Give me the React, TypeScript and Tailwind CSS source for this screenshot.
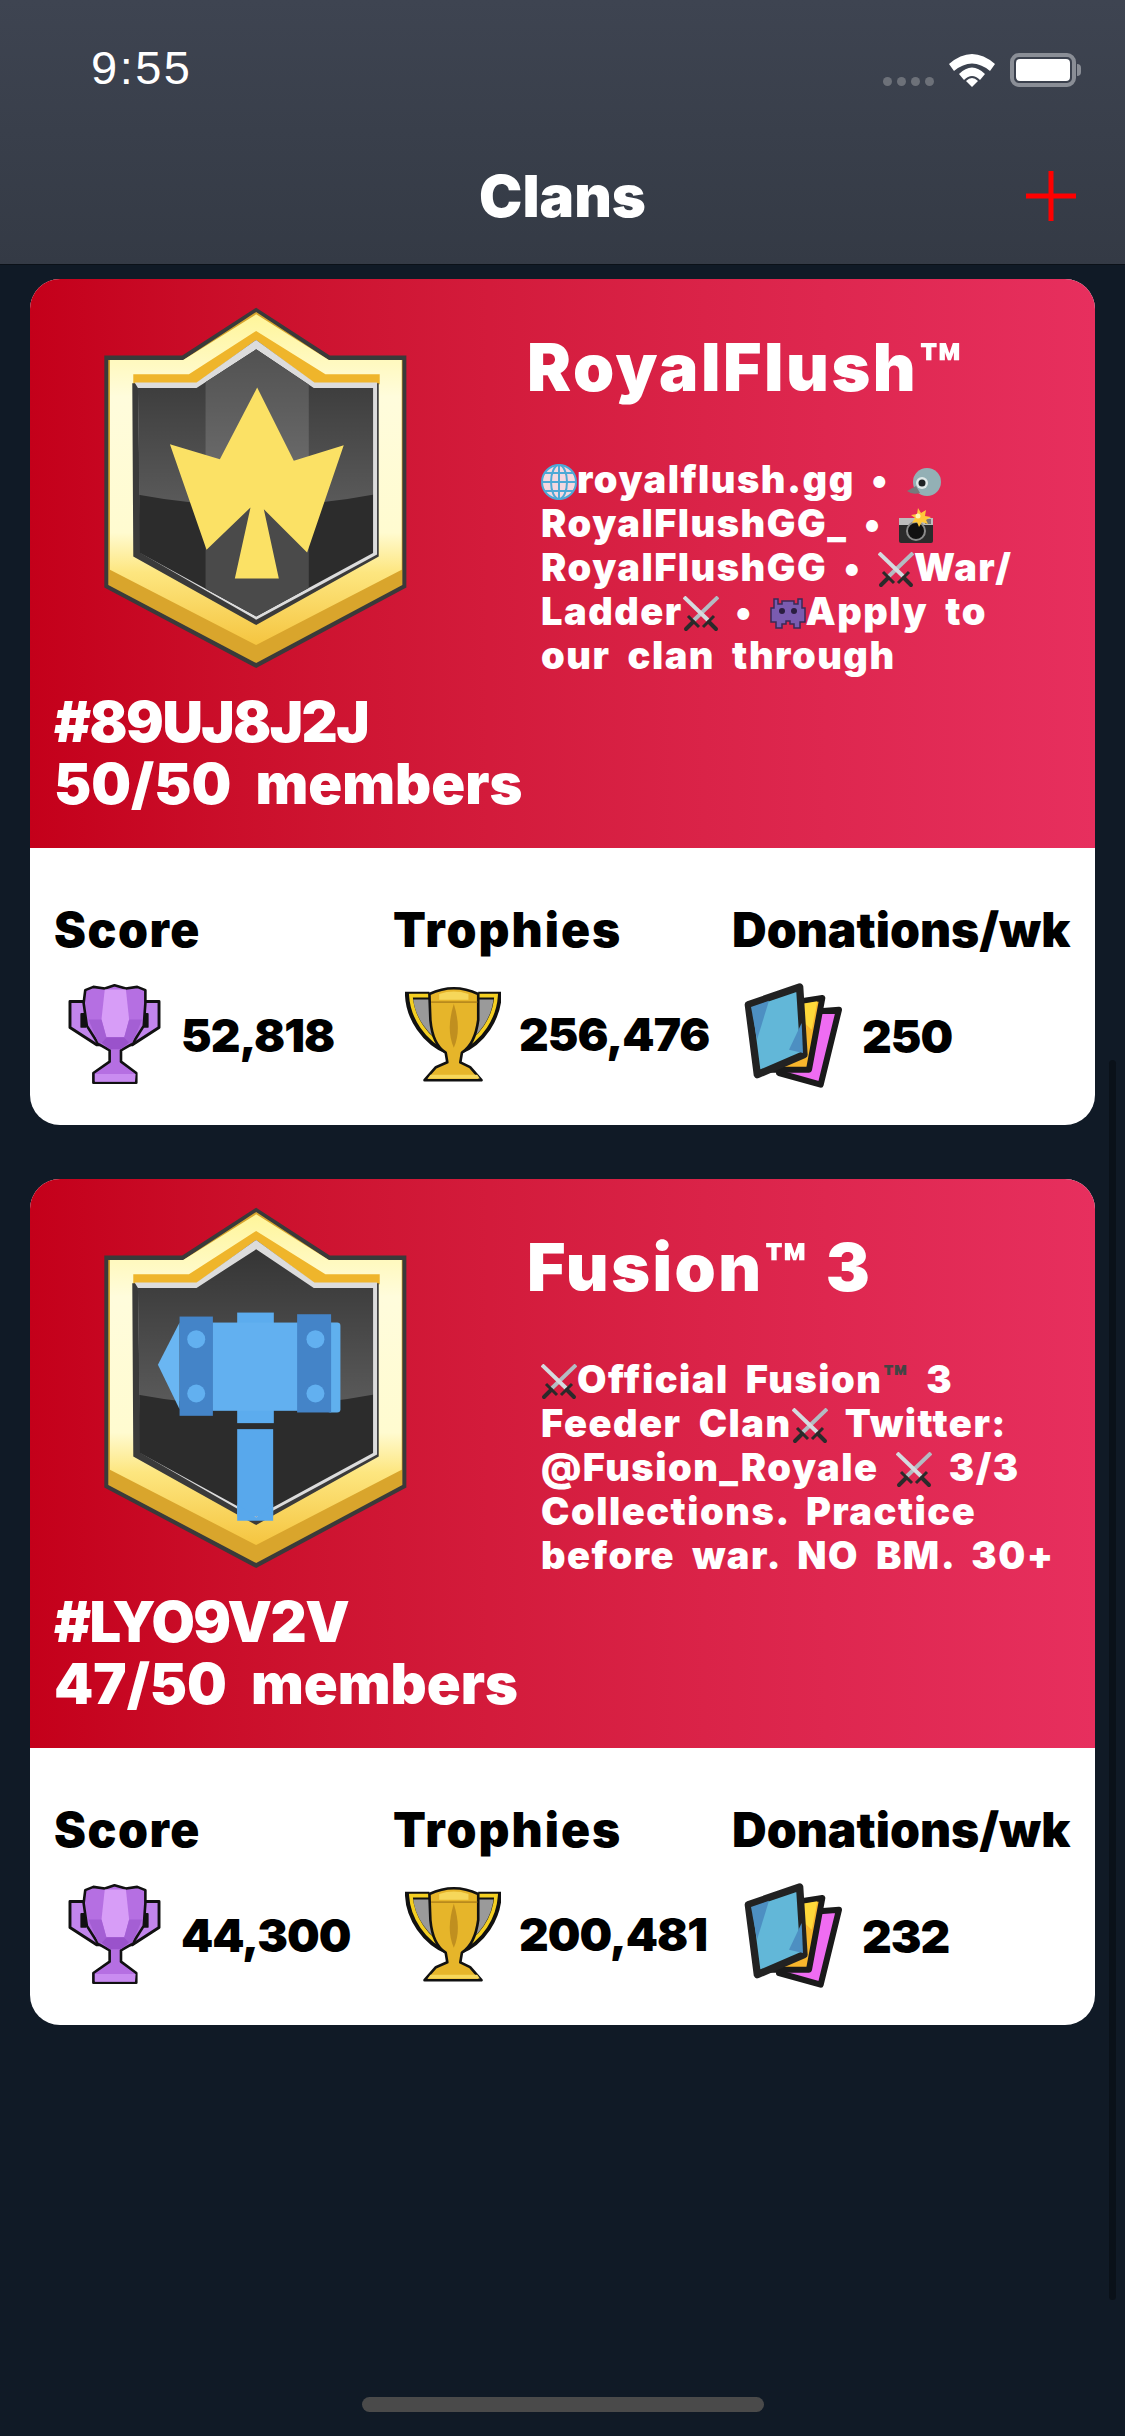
import type { ReactNode } from "react";

// small emoji drawings used in the clan descriptions
function Globe() {
  return (
    <svg viewBox="0 0 36 36" className="inline-block w-[36px] h-[36px] align-[-7px]">
      <circle cx="18" cy="18" r="17" fill="#f6d8e0" stroke="#4ea9d6" strokeWidth="2" />
      <ellipse cx="18" cy="18" rx="8" ry="17" fill="none" stroke="#4ea9d6" strokeWidth="2" />
      <path d="M18 1v34M1 18h34M4 9h28M4 27h28" fill="none" stroke="#4ea9d6" strokeWidth="2" />
    </svg>
  );
}

function Bird() {
  return (
    <svg viewBox="0 0 36 36" className="inline-block w-[36px] h-[36px] align-[-7px]">
      <circle cx="21" cy="18" r="14" fill="#93b0b5" />
      <path d="M10 22 L1 27 Q6 31 14 29z" fill="#77797c" />
      <circle cx="16" cy="19" r="6" fill="#dfe8e8" />
      <circle cx="16" cy="19" r="3.5" fill="#1e2224" />
    </svg>
  );
}

function Camera() {
  return (
    <svg viewBox="0 0 36 36" className="inline-block w-[36px] h-[36px] align-[-7px]">
      <rect x="1" y="10" width="34" height="25" rx="2" fill="#2b2b2b" />
      <rect x="1" y="10" width="34" height="7" fill="#bdbdbd" />
      <circle cx="18" cy="23" r="9" fill="#111" stroke="#8a8a8a" strokeWidth="2" />
      <rect x="27" y="11" width="6" height="5" fill="#777" />
      <path d="M20 0l3 5 5-3-1 6 6 1-5 3 2 4-6-2-3 5-2-5-5 1 3-5-4-3 6-1z" fill="#ffc83a" />
      <circle cx="20" cy="8" r="2.5" fill="#fff4b8" />
    </svg>
  );
}

function Swords() {
  return (
    <svg viewBox="0 0 36 36" className="inline-block w-[36px] h-[36px] align-[-7px]">
      <path d="M35 1 L9 26" stroke="#b3bcc2" strokeWidth="4" />
      <path d="M1 1 L27 26" stroke="#d5dbdf" strokeWidth="4" />
      <path d="M5 20 L16 31 M20 31 L31 20" stroke="#2a2a2a" strokeWidth="3" />
      <path d="M10 26 L3 33 M26 26 L33 33" stroke="#2a2a2a" strokeWidth="4" strokeLinecap="round" />
    </svg>
  );
}

function Alien() {
  return (
    <svg viewBox="0 0 36 36" className="inline-block w-[36px] h-[36px] align-[-7px]">
      <path
        d="M4 3h4v5h4V5h12v3h4V3h4v9h3v14h-5v6h-6v-4h-4v-3h-4v3h-4v4H6v-6H1V12h3z"
        fill="#7a5bb0"
        stroke="#3a2a55"
        strokeWidth="1.5"
      />
      <circle cx="12" cy="15" r="3" fill="#2a1d40" />
      <circle cx="24" cy="15" r="3" fill="#2a1d40" />
    </svg>
  );
}

function Crown() {
  return (
    <polygon
      points="590,325 700,545 850,498 740,820 610,690 655,898 523,898 570,685 438,812 328,495 478,540"
      fill="#fbe165"
    />
  );
}

function Hammer() {
  return (
    <g transform="translate(0 40)">
      <rect x="530" y="710" width="108" height="262" fill="#58a8ec" />
      <polygon points="530,935 587,975 638,935 638,985 530,985" fill="#58a8ec" />
      <rect x="530" y="360" width="110" height="332" fill="#5cacee" />
      <rect x="455" y="390" width="258" height="265" fill="#62b0f0" />
      <polygon points="357,390 292,517 357,650" fill="#6ab6f2" />
      <rect x="800" y="390" width="40" height="270" rx="10" fill="#60b0ee" />
      <rect x="357" y="372" width="100" height="298" fill="#4484c8" />
      <rect x="710" y="365" width="102" height="295" fill="#4484c8" />
      <circle cx="407" cy="440" r="27" fill="#62b0f0" />
      <circle cx="407" cy="603" r="27" fill="#62b0f0" />
      <circle cx="765" cy="440" r="27" fill="#62b0f0" />
      <circle cx="765" cy="603" r="27" fill="#62b0f0" />
    </g>
  );
}

function Badge({ id, dark, children }: { id: string; dark?: boolean; children: ReactNode }) {
  const win = "232,326 408,326 587,210 760,326 938,326 938,822 587,1012 238,822";
  return (
    <svg viewBox="125 80 920 1090" className="w-[307px] h-[363px] ml-[48px] mt-[27px] shrink-0">
      <defs>
        <linearGradient id={`face-${id}`} x1="0" y1="0" x2="0" y2="1">
          <stop offset="0" stopColor="#fff59a" />
          <stop offset="0.25" stopColor="#fffcdc" />
          <stop offset="0.66" stopColor="#fffbd0" />
          <stop offset="0.78" stopColor="#fde680" />
          <stop offset="1" stopColor="#f5c540" />
        </linearGradient>
        <clipPath id={`win-${id}`}>
          <polygon points={win} />
        </clipPath>
        <linearGradient id={`gloss-${id}`} x1="0" y1="0" x2="0" y2="1">
          <stop offset="0" stopColor="#fff" stopOpacity="0.02" />
          <stop offset="1" stopColor="#fff" stopOpacity="0.22" />
        </linearGradient>
      </defs>
      <polygon
        points="587,85 808,229 1038,229 1038,925 587,1167 131,925 131,229 365,229"
        fill="#3a3a3a"
      />
      <polygon
        points="587,98 805,242 1026,242 1026,918 587,1152 143,918 143,242 368,242"
        fill="#d9a52c"
      />
      <polygon
        points="587,105 805,242 1024,242 1024,872 587,1098 148,872 148,242 368,242"
        fill={`url(#face-${id})`}
      />
      {/* orange rim above the window */}
      <polygon points="218,285 385,285 587,155 795,285 958,285 958,315 218,315" fill="#efb52b" />
      <polygon points="215,312 408,312 587,182 762,312 955,312 955,832 587,1038 218,832" fill="#3a3a3a" />
      <polygon points="222,310 408,310 587,182 762,310 950,310 950,826 587,1022 240,822 232,326" fill="#dcdcdc" />
      <polygon points={win} fill="#2c2c2c" />
      <g clipPath={`url(#win-${id})`}>
        {!dark && <rect x="435" y="150" width="310" height="900" fill="#4a4a4a" />}
        <path d="M200 150 H970 V640 Q590 720 200 640z" fill={`url(#gloss-${id})`} />
      </g>
      {children}
    </svg>
  );
}

function PurpleTrophy() {
  return (
    <svg viewBox="50 38 290 320" className="w-[97px] h-[104px] shrink-0">
      <path d="M108 95 H58 V175 L140 228 H250 L332 175 V95 H282z" fill="#c285ec" stroke="#111" strokeWidth="9" strokeLinejoin="round" />
      <rect x="90" y="130" width="18" height="46" rx="3" fill="#111" />
      <rect x="282" y="130" width="18" height="46" rx="3" fill="#111" />
      <path
        d="M105 60 L130 50 L165 55 L195 45 L230 55 L265 50 L290 60 V100 L285 170 L250 225 L215 245 V280 L262 315 V345 H130 V315 L180 280 V245 L145 225 L110 170 L100 100z"
        fill="#b56fe2"
        stroke="#111"
        strokeWidth="8"
        strokeLinejoin="round"
      />
      <polygon points="165,58 230,58 240,150 225,205 170,205 155,150" fill="#d79df7" />
      <polygon points="115,150 155,150 170,205 155,222 145,222" fill="#a45fd4" />
      <polygon points="280,150 240,150 225,205 240,222 250,222" fill="#a45fd4" />
      <polygon points="155,222 170,205 225,205 240,222 215,242 180,242" fill="#9a52cb" />
      <polygon points="135,318 260,318 258,342 135,342" fill="#c98cf0" />
    </svg>
  );
}

function GoldTrophy() {
  return (
    <svg viewBox="40 38 295 310" className="w-[96px] h-[102px] shrink-0">
      <path d="M115 75 H58 C62 140 105 210 175 240 H205 C275 210 316 140 320 75 H265z" fill="#9a9a9a" />
      <path
        d="M115 75 H52 C55 140 100 215 175 245 M265 75 H325 C322 140 280 215 205 245"
        fill="none"
        stroke="#111"
        strokeWidth="24"
      />
      <path d="M115 75 H58 C62 140 105 210 175 240" fill="none" stroke="#f4cf22" strokeWidth="11" />
      <path d="M265 75 H320 C316 140 275 210 205 240" fill="none" stroke="#f4cf22" strokeWidth="11" />
      <path
        d="M115 70 Q190 35 265 70 L265 150 Q255 225 215 250 L210 280 L240 295 L275 335 H100 L135 295 L170 280 L165 250 Q125 225 118 150z"
        fill="#e6b52a"
        stroke="#111"
        strokeWidth="8"
        strokeLinejoin="round"
      />
      <path d="M190 100 Q165 180 190 235 Q215 180 190 100" fill="#c08f1f" />
      <path d="M120 95 H262" stroke="#b88a1c" strokeWidth="5" />
      <path d="M145 70 Q190 55 235 70 V88 H145z" fill="#f6d75a" />
      <path d="M110 330 H270 L262 318 H118z" fill="#f6d75a" />
    </svg>
  );
}

function CardsIcon() {
  return (
    <svg viewBox="65 40 300 318" className="w-[100px] h-[106px] shrink-0">
      <path d="M225 130 L350 120 L295 345 L170 310z" fill="#ef6cf2" stroke="#1a1a1a" strokeWidth="18" strokeLinejoin="round" />
      <path d="M170 105 L300 85 L260 300 L130 300z" fill="#f7b52c" stroke="#1a1a1a" strokeWidth="18" strokeLinejoin="round" />
      <path d="M195 110 L285 95 L268 180z" fill="#ffd93a" />
      <path d="M78 105 L232 52 L245 255 L105 315z" fill="#62b7d8" stroke="#222" strokeWidth="22" strokeLinejoin="round" />
      <path d="M86 112 L140 93 L104 210z" fill="#4d8fc2" />
      <path d="M200 240 L238 160 L242 250z" fill="#4d8fc2" />
    </svg>
  );
}

function Stat({ label, labelClass, icon, value }: { label: string; labelClass: string; icon: ReactNode; value: string }) {
  return (
    <div>
      <div className={`text-[48px] leading-[50px] font-black whitespace-nowrap ${labelClass}`}>{label}</div>
      <div className="flex items-center mt-[28px] ml-[12px]">
        {icon}
        <span className="ml-[18px] text-[46px] font-black tracking-[-1px]">{value}</span>
      </div>
    </div>
  );
}

const clans = [
  {
    id: "royal",
    name: "RoyalFlush™",
    tag: "#89UJ8J2J",
    members: "50/50 members",
    score: "52,818",
    trophies: "256,476",
    donations: "250",
    dark: false,
    crest: <Crown />,
    lines: [
      <>
        <Globe />
        royalflush.gg • <Bird />
      </>,
      <>RoyalFlushGG_ • <Camera /></>,
      <>
        RoyalFlushGG • <Swords />
        War/
      </>,
      <>
        Ladder
        <Swords /> • <Alien />
        Apply to
      </>,
      <>our clan through</>,
    ],
  },
  {
    id: "fusion",
    name: "Fusion™ 3",
    tag: "#LYO9V2V",
    members: "47/50 members",
    score: "44,300",
    trophies: "200,481",
    donations: "232",
    dark: true,
    crest: <Hammer />,
    lines: [
      <>
        <Swords />
        Official Fusion<span className="text-[#444]">™</span> 3
      </>,
      <>
        Feeder Clan
        <Swords /> Twitter:
      </>,
      <>
        @Fusion_Royale <Swords /> 3/3
      </>,
      <>Collections. Practice</>,
      <>before war. NO BM. 30+</>,
    ],
  },
];

export default function App() {
  return (
    <div className="relative w-[1125px] h-[2436px] overflow-hidden bg-[#101a26] [font-family:Inter,sans-serif]">
      {/* Header */}
      <div className="h-[265px] bg-linear-to-b from-[#3e4451] to-[#343a45] border-b border-[#0b1118] text-white">
        <div className="flex justify-between pt-[42px] pl-[91px] pr-[44px] h-[150px]">
          <span className="text-[47px] leading-[52px] tracking-[2.5px] [font-family:'Liberation_Sans',sans-serif]">9:55</span>
          <div className="flex items-end gap-[15px] h-[44px] mt-[10px]">
            <div className="flex gap-[5px] mb-[10px]">
              <div className="w-[9px] h-[9px] rounded-full bg-[#6d7179]"></div>
              <div className="w-[9px] h-[9px] rounded-full bg-[#6d7179]"></div>
              <div className="w-[9px] h-[9px] rounded-full bg-[#6d7179]"></div>
              <div className="w-[9px] h-[9px] rounded-full bg-[#6d7179]"></div>
            </div>
            <svg viewBox="0 0 46 34" className="w-[46px] h-[34px] mb-[9px]" fill="white">
              <path d="M0 11 Q23 -9 46 11 L41 18 Q23 3 5 18z" />
              <path d="M10 21 Q23 8 36 21 L31 27 Q23 19 15 27z" />
              <path d="M17 28 Q23 22 29 28 L23 34z" />
            </svg>
            <div className="flex items-center mb-[9px]">
              <div className="w-[66px] h-[34px] rounded-[9px] border-[4px] border-[#8a8e96] p-[2px]">
                <div className="w-full h-full rounded-[4px] bg-white"></div>
              </div>
              <div className="w-[4px] h-[12px] rounded-r-full bg-[#8a8e96] ml-[1px]"></div>
            </div>
          </div>
        </div>
        <div className="relative text-center mt-[14px]">
          <span className="text-[58px] leading-[64px] font-black">Clans</span>
          <svg viewBox="0 0 50 50" className="absolute right-[49px] top-[7px] w-[50px] h-[50px]">
            <path d="M25 0v50M0 25h50" stroke="#ff0000" strokeWidth="5" />
          </svg>
        </div>
      </div>

      {/* Clan cards */}
      <div className="flex flex-col gap-[54px] px-[30px] pt-[14px]">
        {clans.map((c) => (
          <div key={c.id} className="rounded-[30px] overflow-hidden bg-white">
            <div className="flex h-[569px] text-white bg-linear-to-r from-[#c4001a] to-[#e72f5e]">
              <div className="w-[497px] pl-[24px] shrink-0">
                <Badge id={c.id} dark={c.dark}>
                  {c.crest}
                </Badge>
                <div className="mt-[22px] text-[56px] leading-[62px] font-black whitespace-nowrap">
                  <div className="tracking-[-1.5px]">{c.tag}</div>
                  <div className="[word-spacing:13px]">{c.members}</div>
                </div>
              </div>
              <div className="pt-[52px]">
                <div className="text-[66px] leading-[72px] font-black tracking-[2.5px] whitespace-nowrap">{c.name}</div>
                <div className="mt-[54px] pl-[14px] text-[38px] leading-[44px] font-black tracking-[1.5px] [word-spacing:8px]">
                  {c.lines.map((l, i) => (
                    <div key={i} className="whitespace-nowrap">
                      {l}
                    </div>
                  ))}
                </div>
              </div>
            </div>
            <div className="grid grid-cols-3 h-[277px] px-[24px] pt-[57px] text-black">
              <Stat label="Score" labelClass="tracking-[1.5px]" icon={<PurpleTrophy />} value={c.score} />
              <Stat label="Trophies" labelClass="tracking-[2px]" icon={<GoldTrophy />} value={c.trophies} />
              <Stat label="Donations/wk" labelClass="tracking-[0px]" icon={<CardsIcon />} value={c.donations} />
            </div>
          </div>
        ))}
      </div>

      {/* Scroll indicator */}
      <div className="absolute left-[1109px] top-[1060px] w-[7px] h-[1240px] rounded-full bg-[#0a1119]"></div>
      {/* Home indicator */}
      <div className="absolute left-[362px] top-[2397px] w-[402px] h-[15px] rounded-full bg-[#4a4a4a]"></div>
    </div>
  );
}
